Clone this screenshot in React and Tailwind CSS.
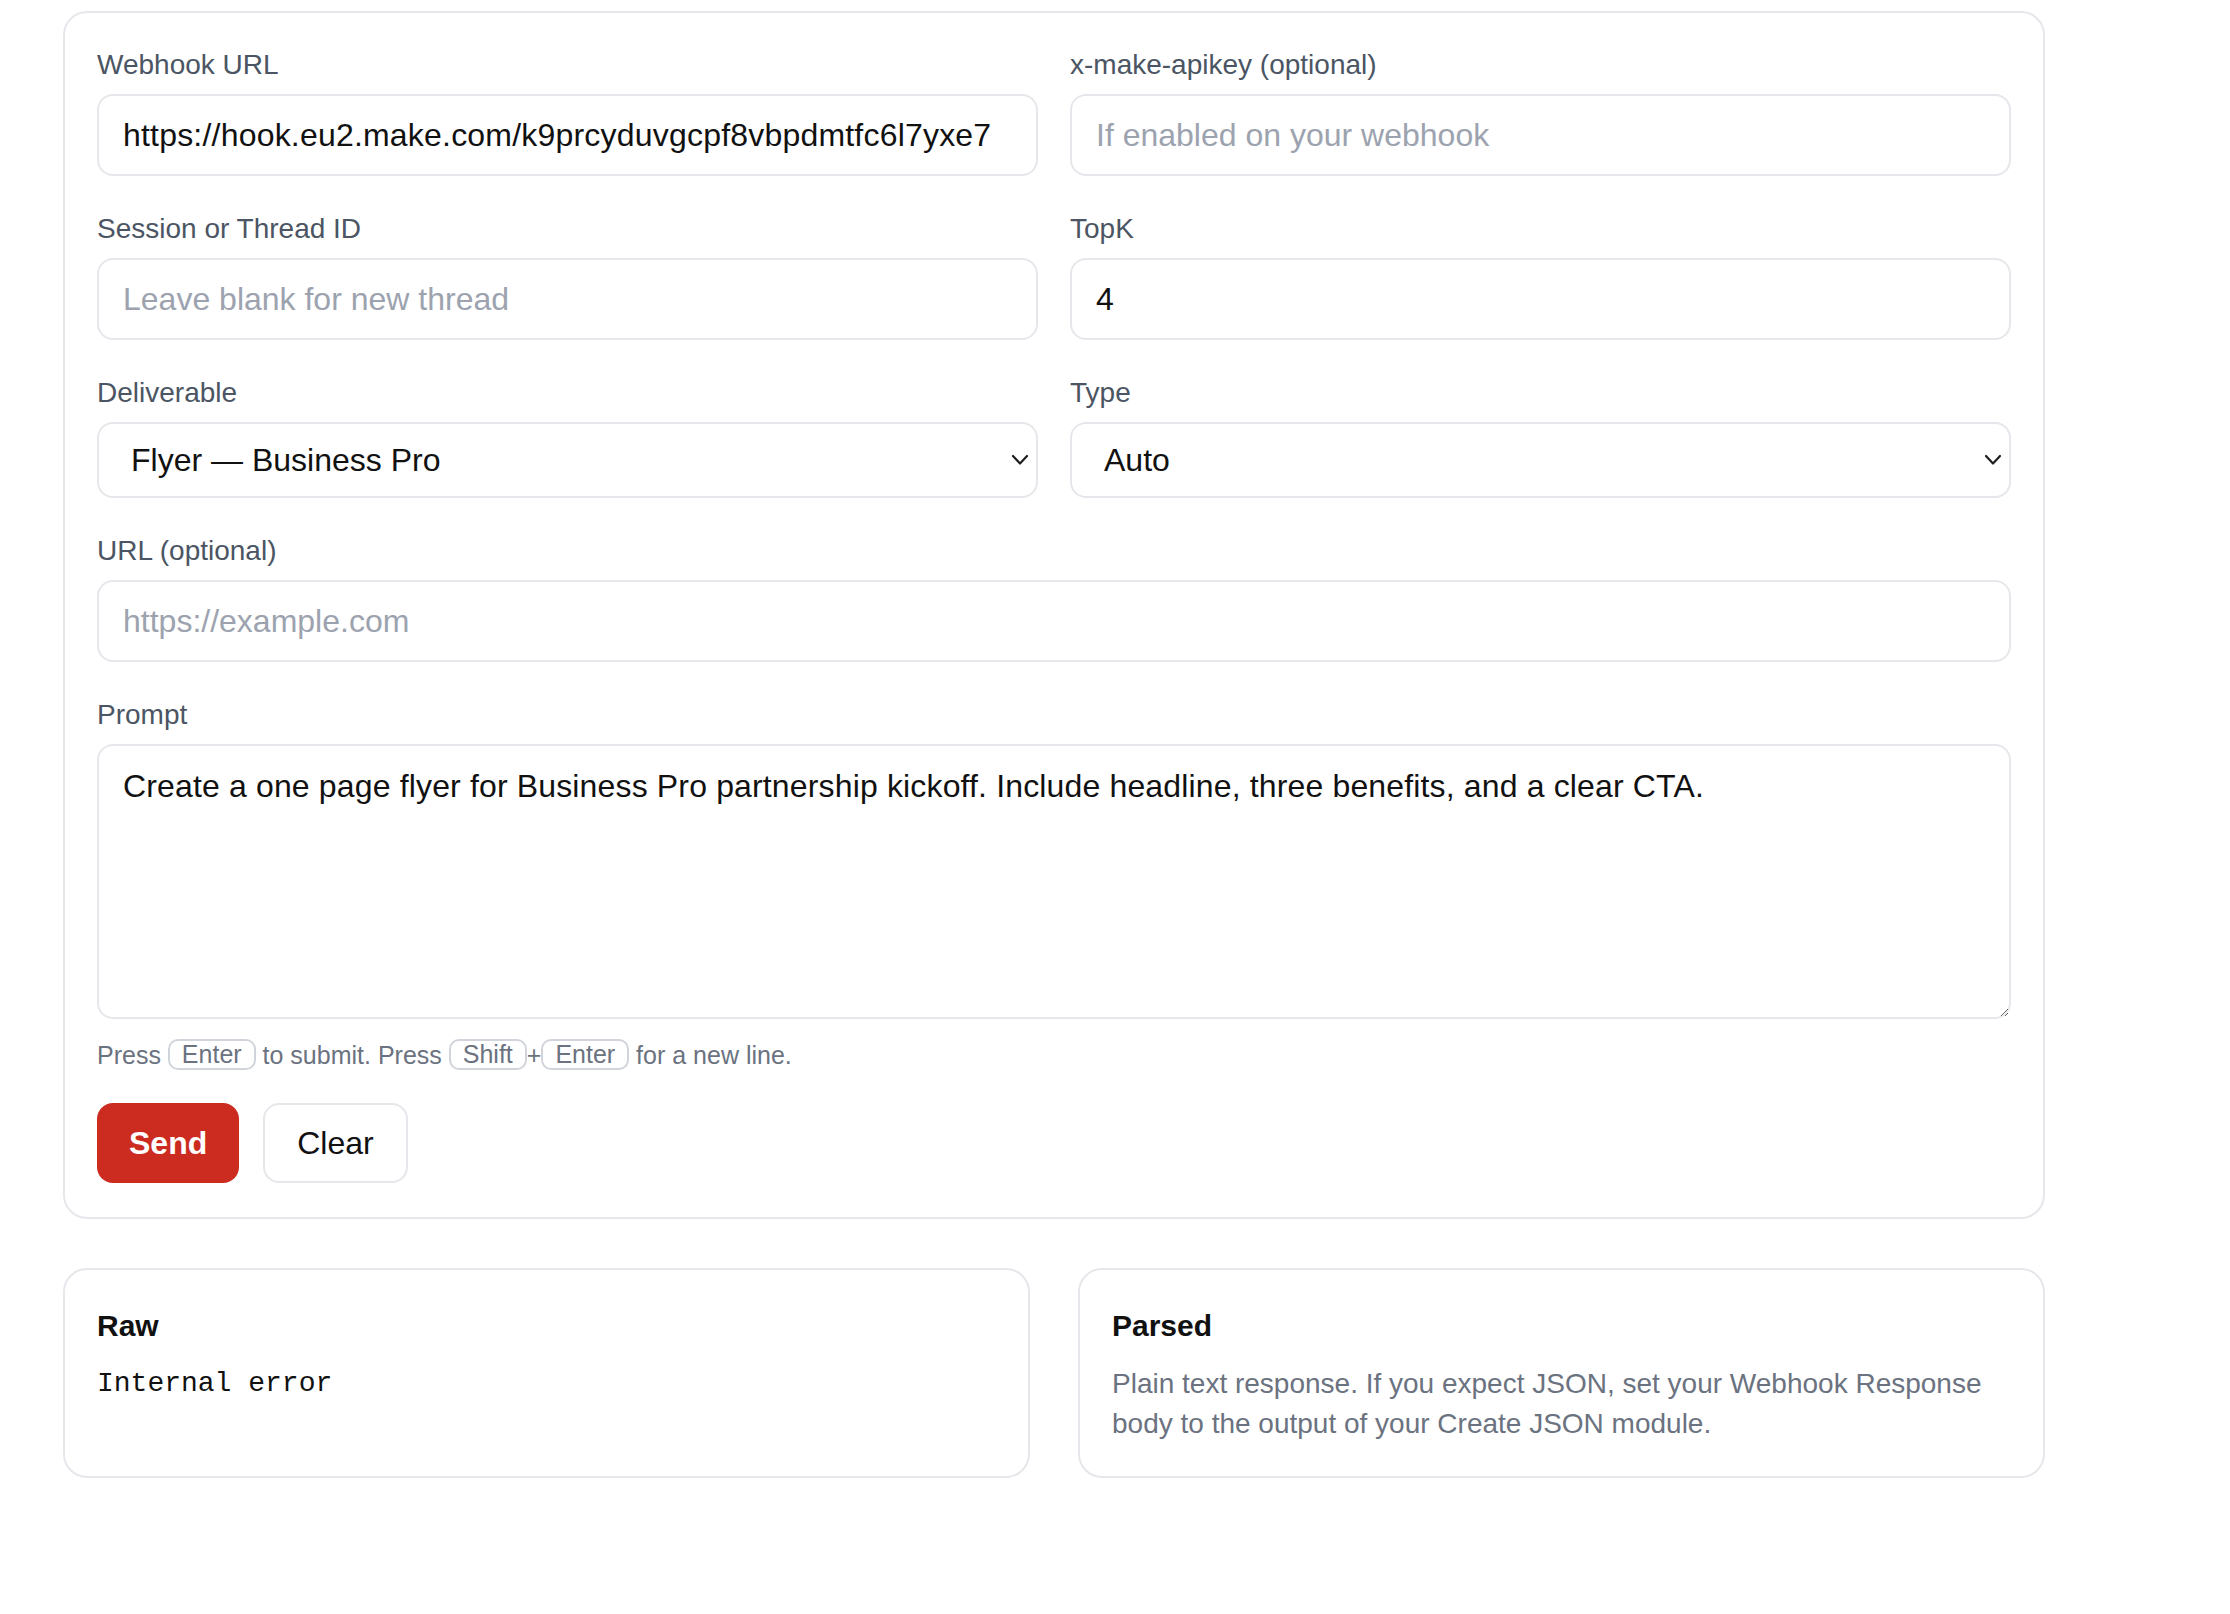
import { useState } from "react";

const LABEL = "block text-[28px] leading-[40px] text-[#4b5563] mb-[9px]";
const FIELD =
  "block w-full rounded-[16px] border-2 border-[#e5e7eb] bg-white px-[24px] text-[32px] text-[#111111] placeholder:text-[#9ca3af] outline-none";

function Field({ label, span, children }) {
  return (
    <div className={span ? "col-span-2" : ""}>
      <label className={LABEL}>{label}</label>
      {children}
    </div>
  );
}

function Select({ value, options }) {
  return (
    <div className="relative">
      <select
        defaultValue={value}
        className="block h-[76px] w-full appearance-none rounded-[16px] border-2 border-[#e5e7eb] bg-white pl-[32px] pr-[48px] text-[32px] text-[#111111] outline-none"
      >
        {options.map((o) => (
          <option key={o}>{o}</option>
        ))}
      </select>
      <svg
        className="pointer-events-none absolute right-[9px] top-1/2 h-[12px] w-[18px] -translate-y-1/2"
        viewBox="0 0 18 12"
        fill="none"
        stroke="#1f1f1f"
        strokeWidth="2.2"
        strokeLinecap="round"
        strokeLinejoin="round"
      >
        <polyline points="2,2 9,9.5 16,2" />
      </svg>
    </div>
  );
}

function Kbd({ children }) {
  return (
    <kbd className="inline-block rounded-[10px] border-2 border-[#d1d5db] px-[12px] font-['Liberation_Sans',Arial,sans-serif] text-[25px] leading-[27px] text-[#6b7280] align-[1px]">
      {children}
    </kbd>
  );
}

export default function App() {
  const [prompt, setPrompt] = useState(
    "Create a one page flyer for Business Pro partnership kickoff. Include headline, three benefits, and a clear CTA."
  );

  return (
    <div className="min-h-screen bg-white font-['Liberation_Sans',Arial,sans-serif]">
      <div className="ml-[63px] w-[1982px] pt-[11px]">
        <div className="rounded-[24px] border-2 border-[#e5e7eb] px-[32px] pt-[32px] pb-[34px]">
          <div className="grid grid-cols-2 gap-x-[32px] gap-y-[33px]">
            <Field label="Webhook URL">
              <input
                className={`${FIELD} h-[82px] tracking-[0.2px]`}
                defaultValue="https://hook.eu2.make.com/k9prcyduvgcpf8vbpdmtfc6l7yxe7"
              />
            </Field>
            <Field label="x-make-apikey (optional)">
              <input className={`${FIELD} h-[82px]`} placeholder="If enabled on your webhook" />
            </Field>
            <Field label="Session or Thread ID">
              <input className={`${FIELD} h-[82px]`} placeholder="Leave blank for new thread" />
            </Field>
            <Field label="TopK">
              <input className={`${FIELD} h-[82px]`} defaultValue="4" />
            </Field>
            <Field label="Deliverable">
              <Select
                value="Flyer — Business Pro"
                options={["Flyer — Business Pro", "Flyer — Starter", "One pager", "Email"]}
              />
            </Field>
            <Field label="Type">
              <Select value="Auto" options={["Auto", "Text", "JSON"]} />
            </Field>
            <Field label="URL (optional)" span>
              <input className={`${FIELD} h-[82px]`} placeholder="https://example.com" />
            </Field>
            <Field label="Prompt" span>
              <textarea
                value={prompt}
                onChange={(e) => setPrompt(e.target.value)}
                className={`${FIELD} h-[275px] py-[16px] leading-[48px] tracking-[0.15px]`}
              />
              <p className="mt-[20px] text-[25px] leading-[32px] text-[#6b7280]">
                Press <Kbd>Enter</Kbd> to submit. Press <Kbd>Shift</Kbd>+<Kbd>Enter</Kbd> for a new line.
              </p>
              <div className="mt-[32px] flex gap-[24px]">
                <button className="h-[80px] rounded-[16px] bg-[#cc2b1f] px-[32px] text-[32px] font-semibold text-white">
                  Send
                </button>
                <button
                  onClick={() => setPrompt("")}
                  className="h-[80px] rounded-[16px] border-2 border-[#e5e7eb] bg-white px-[32px] text-[32px] text-[#111111]"
                >
                  Clear
                </button>
              </div>
            </Field>
          </div>
        </div>

        <div className="mt-[49px] grid grid-cols-2 gap-x-[48px]">
          <div className="rounded-[24px] border-2 border-[#e5e7eb] p-[32px]">
            <h3 className="mb-[14px] text-[30px] font-semibold leading-[48px] text-[#111111]">Raw</h3>
            <pre className="font-['Liberation_Mono','Courier_New',monospace] text-[28px] leading-[40px] text-[#111111]">
              Internal error
            </pre>
          </div>
          <div className="rounded-[24px] border-2 border-[#e5e7eb] p-[32px]">
            <h3 className="mb-[14px] text-[30px] font-semibold leading-[48px] text-[#111111]">Parsed</h3>
            <p className="text-[28px] leading-[40px] text-[#6b7280]">
              Plain text response. If you expect JSON, set your Webhook Response body to the output of your Create
              JSON module.
            </p>
          </div>
        </div>
      </div>
    </div>
  );
}
